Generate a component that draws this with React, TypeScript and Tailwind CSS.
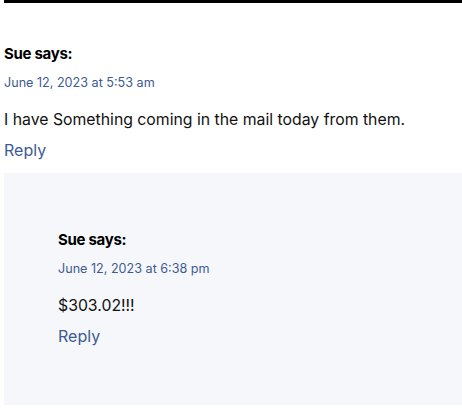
import React from "react";

type Comment = {
  author: string;
  date: string;
  body: string;
};

const CommentBody: React.FC<{ comment: Comment }> = ({ comment }) => (
  <div className="flex flex-col">
    <p className="text-[15px] font-bold leading-[20px] tracking-[-0.3px] text-black">
      {comment.author} says:
    </p>
    <p className="mt-[10px] text-[12.6px] leading-[18px] text-[#3d5b92]">{comment.date}</p>
    <p className="mt-[18px] text-[15.8px] leading-[20px] text-[#111]">{comment.body}</p>
    <a href="#" className="mt-[10px] text-[16px] leading-[21px] text-[#3d5b92]">
      Reply
    </a>
  </div>
);

export default function App() {
  const parent: Comment = {
    author: "Sue",
    date: "June 12, 2023 at 5:53 am",
    body: "I have Something coming in the mail today from them.",
  };
  const child: Comment = {
    author: "Sue",
    date: "June 12, 2023 at 6:38 pm",
    body: "$303.02!!!",
  };

  return (
    <div className="h-[413px] w-[462px] bg-white pl-[4px] font-['Inter',sans-serif]">
      <div className="h-[3px] bg-black" />
      <div className="pt-[41px]">
        <CommentBody comment={parent} />
      </div>
      <div className="mt-[12px] h-[232px] bg-[#f5f7fa] pl-[54px] pt-[57px]">
        <CommentBody comment={child} />
      </div>
    </div>
  );
}
